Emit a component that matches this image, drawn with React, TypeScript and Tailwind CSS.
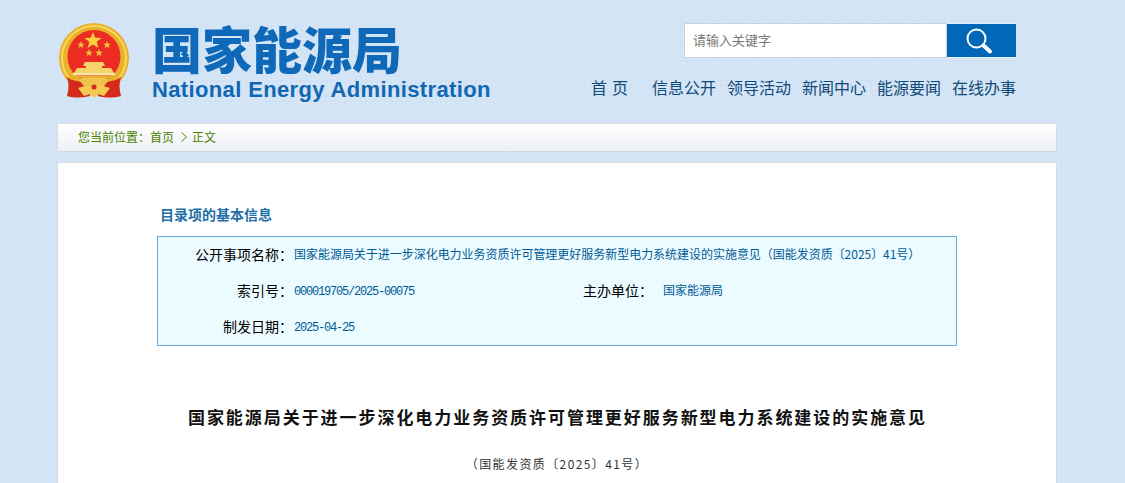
import React from 'react';

const cjk = "font-['Noto_Sans_CJK_SC','Liberation_Sans',sans-serif]";

const navItems = ['信息公开', '领导活动', '新闻中心', '能源要闻', '在线办事'];

const smallStar = "0,-4 1,-1.3 3.8,-1.2 1.6,0.5 2.4,3.2 0,1.6 -2.4,3.2 -1.6,0.5 -3.8,-1.2 -1,-1.3";

const Emblem: React.FC = () => (
    <svg width="72" height="76" viewBox="0 0 72 76" className="block">
        {/* ring */}
        <circle cx="36" cy="35" r="35" fill="#e9b02a" />
        <circle cx="36" cy="35" r="32" fill="none" stroke="#f8d860" strokeWidth="2" />
        <circle cx="36" cy="33.5" r="26.5" fill="#ec2c22" />
        {/* stars */}
        <polygon points="35,9 37.3,14.8 43.6,15 38.7,18.8 40.4,25 35,21.4 29.6,25 31.3,18.8 26.4,15 32.7,14.8" fill="#f8cf3e" />
        <polygon points={smallStar} transform="translate(23 22)" fill="#f3c23a" />
        <polygon points={smallStar} transform="translate(49 22)" fill="#f3c23a" />
        <polygon points={smallStar} transform="translate(31 30)" fill="#f3c23a" />
        <polygon points={smallStar} transform="translate(41 30)" fill="#f3c23a" />
        {/* tiananmen */}
        <path d="M27 39 L45 39 L47 43 L44 43 L44 45 L53 45 L56 50 L16 50 L19 45 L28 45 L28 43 L25 43 Z" fill="#f6d36c" />
        <rect x="15" y="50" width="42" height="2.5" fill="#fbe7a8" />
        <rect x="11" y="53" width="50" height="2.5" fill="#e9b02a" />
        {/* ribbons */}
        <path d="M9 54 C14 58 24 60 32 58 L32 73 C24 75 16 75 9 73 C11 66 11 60 9 54 Z" fill="#d42a1c" />
        <path d="M63 54 C58 58 48 60 40 58 L40 73 C48 75 56 75 63 73 C61 66 61 60 63 54 Z" fill="#d42a1c" />
        {/* knot */}
        <path d="M21 57 C25 53 31 56 36 54 C41 56 47 53 51 57 L46 63 L26 63 Z" fill="#f0c44c" />
        <path d="M20 65 L30 62 L36 65 L42 62 L52 65 L46 73 L40 71 L36 75 L32 71 L26 73 Z" fill="#f2ca50" />
        <circle cx="36" cy="64" r="2.5" fill="#d42a1c" />
    </svg>
);

const SearchIcon: React.FC = () => (
    <svg width="28" height="28" viewBox="0 0 28 28" fill="none" stroke="#fff" className="mr-[5px]">
        <circle cx="11.5" cy="11.5" r="9" strokeWidth="2" />
        <path d="M18.5 18.5 L25 24.5" strokeWidth="4" strokeLinecap="round" />
    </svg>
);

const App: React.FC = () => {
    return (
        <div className={`h-screen overflow-hidden bg-[#d5e6f7] bg-[linear-gradient(#d1e3f5_2px,transparent_2px),linear-gradient(90deg,#d1e3f5_2px,transparent_2px)] bg-[size:5px_5px] ${cjk}`}>
            <div className="w-[1000px] ml-[57px]">
                {/* header */}
                <header className="h-[123px] flex justify-between pl-[1px] pr-[41px]">
                    <div className="flex items-start">
                        <div className="pt-[23px]">
                            <Emblem />
                        </div>
                        <div className="ml-[22px] pt-[17px]">
                            <div className="text-[50px] leading-[60px] font-black text-[#0f69b8]">国家能源局</div>
                            <div className="text-[22px] leading-[26px] font-bold tracking-[0.36px] text-[#1167b1] font-['Liberation_Sans',sans-serif] whitespace-nowrap">
                                National Energy Administration
                            </div>
                        </div>
                    </div>
                    <div className="w-[425px] pt-[23px]">
                        <div className="flex h-[35px] w-[332px] ml-auto">
                            <div className="w-[263px] bg-white border border-[#c9d3dc] pl-[8px] text-[13px] leading-[31px] text-[#777]">请输入关键字</div>
                            <button className="w-[69px] bg-[#0068b7] flex items-center justify-center border-t border-b border-[#e3eef8]">
                                <SearchIcon />
                            </button>
                        </div>
                        <nav className="mt-[17px] flex text-[16px] leading-[24px] text-[#114a78] whitespace-nowrap">
                            <span className="w-[37px] mr-[24px] flex justify-between">
                                <span>首</span>
                                <span>页</span>
                            </span>
                            <div className="flex flex-1 justify-between">
                                {navItems.map((item) => (
                                    <span key={item}>{item}</span>
                                ))}
                            </div>
                        </nav>
                    </div>
                </header>

                {/* breadcrumb */}
                <div className="h-[29px] border border-[#dadada] bg-gradient-to-b from-white to-[#edf0f4] pl-[20px] pb-[2px] text-[12px] text-[#4b7f00] flex items-center">
                    <span>您当前位置：</span>
                    <span>首页</span>
                    <svg width="6" height="10" viewBox="0 0 6 10" className="ml-[7px] mr-[5px]" fill="none" stroke="#4b7f00">
                        <path d="M0.5 0.5 L5.5 5 L0.5 9.5" />
                    </svg>
                    <span>正文</span>
                </div>

                {/* content */}
                <main className="mt-[10px] h-[400px] bg-white border border-[#dadada] pt-[41px] px-[99px]">
                    <h2 className="pl-[3px] text-[14px] leading-[20px] font-bold text-[#1f6fa8]">目录项的基本信息</h2>
                    <div className="mt-[12px] h-[110px] border border-[#6aa9e0] bg-[#ecfbff]">
                        <div className="h-[36px] flex items-center">
                            <span className="w-[135px] pb-[2px] text-right text-[14px] text-black">公开事项名称：</span>
                            <span className="ml-[1px] pb-[2px] text-[12px] tracking-[-0.03px] text-[#005a96] whitespace-nowrap">
                                国家能源局关于进一步深化电力业务资质许可管理更好服务新型电力系统建设的实施意见（国能发资质〔2025〕41号）
                            </span>
                        </div>
                        <div className="h-[36px] flex items-center">
                            <span className="w-[135px] pb-[2px] text-right text-[14px] text-black">索引号：</span>
                            <span className="ml-[1px] pt-[1px] w-[289px] text-[12px] tracking-[-1.2px] text-[#005a96] font-['Liberation_Mono',monospace]">000019705/2025-00075</span>
                            <span className="text-[14px] pb-[2px] text-black w-[80px]">主办单位：</span>
                            <span className="text-[12px] pb-[2px] text-[#005a96]">国家能源局</span>
                        </div>
                        <div className="h-[36px] flex items-center">
                            <span className="w-[135px] pb-[2px] text-right text-[14px] text-black">制发日期：</span>
                            <span className="ml-[1px] pt-[1px] text-[12px] tracking-[-1.2px] text-[#005a96] font-['Liberation_Mono',monospace]">2025-04-25</span>
                        </div>
                    </div>
                    <h1 className="mt-[59px] ml-[1px] text-center text-[17px] leading-[24px] font-bold tracking-[1.95px] text-[#111] whitespace-nowrap">
                        国家能源局关于进一步深化电力业务资质许可管理更好服务新型电力系统建设的实施意见
                    </h1>
                    <p className="mt-[25px] text-center text-[12px] leading-[20px] tracking-[1.4px] text-[#333]">（国能发资质〔2025〕41号）</p>
                </main>
            </div>
        </div>
    );
};

export default App;
